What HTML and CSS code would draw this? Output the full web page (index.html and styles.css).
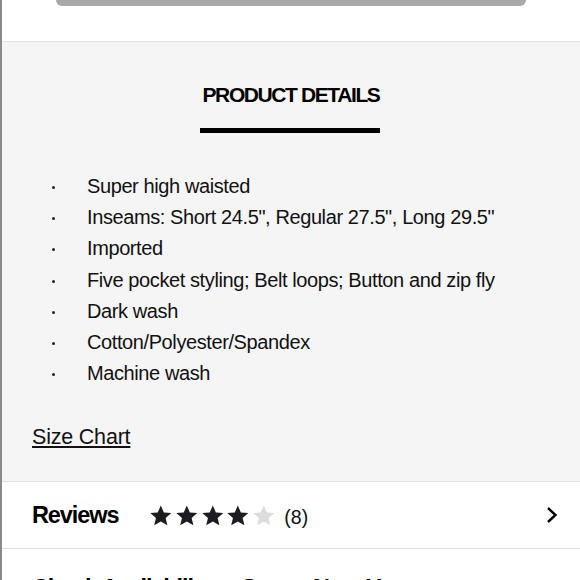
FILE: index.html
```html
<!DOCTYPE html>
<html lang="en">
<head>
    <meta charset="UTF-8">
    <meta name="viewport" content="width=device-width, initial-scale=1.0">
    <title>Product Details</title>
    <link rel="stylesheet" href="styles.css">
</head>
<body>
    <div class="top">
        <div class="handle"></div>
    </div>
    <div class="details">
        <h2 class="title">PRODUCT DETAILS</h2>
        <div class="rule"></div>
        <ul class="list">
            <li>Super high waisted</li>
            <li>Inseams: Short 24.5", Regular 27.5", Long 29.5"</li>
            <li>Imported</li>
            <li>Five pocket styling; Belt loops; Button and zip fly</li>
            <li>Dark wash</li>
            <li>Cotton/Polyester/Spandex</li>
            <li>Machine wash</li>
        </ul>
        <a class="size" href="#">Size Chart</a>
    </div>
    <div class="row">
        <span class="label">Reviews</span>
        <span class="stars">
            <svg viewBox="0 0 24 24" class="star"><path d="M12 1.5l3.1 7.1 7.6.6-5.8 5 1.8 7.5L12 17.7l-6.7 4 1.8-7.5-5.8-5 7.6-.6z"/></svg>
            <svg viewBox="0 0 24 24" class="star"><path d="M12 1.5l3.1 7.1 7.6.6-5.8 5 1.8 7.5L12 17.7l-6.7 4 1.8-7.5-5.8-5 7.6-.6z"/></svg>
            <svg viewBox="0 0 24 24" class="star"><path d="M12 1.5l3.1 7.1 7.6.6-5.8 5 1.8 7.5L12 17.7l-6.7 4 1.8-7.5-5.8-5 7.6-.6z"/></svg>
            <svg viewBox="0 0 24 24" class="star"><path d="M12 1.5l3.1 7.1 7.6.6-5.8 5 1.8 7.5L12 17.7l-6.7 4 1.8-7.5-5.8-5 7.6-.6z"/></svg>
            <svg viewBox="0 0 24 24" class="star empty"><path d="M12 1.5l3.1 7.1 7.6.6-5.8 5 1.8 7.5L12 17.7l-6.7 4 1.8-7.5-5.8-5 7.6-.6z"/></svg>
        </span>
        <span class="count">(8)</span>
        <svg class="chevron" viewBox="0 0 12 18"><path d="M2 2l7.5 7-7.5 7"/></svg>
    </div>
    <div class="row last">
        <span class="label">Check Availability at Stores Near You</span>
        <svg class="chevron" viewBox="0 0 12 18"><path d="M2 2l7.5 7-7.5 7"/></svg>
    </div>
</body>
</html>
```

FILE: styles.css
```css
body {
    margin: 0;
    padding: 0;
    font-family: "Liberation Sans", Arial, sans-serif;
    color: #111;
    background-color: #fff;
    border-left: 2px solid #8a8a8a;
    min-height: 100vh;
    box-sizing: border-box;
    overflow: hidden;
}
.top {
    height: 41px;
    border-bottom: 1px solid #e4e4e4;
}
.handle {
    height: 6px;
    margin: 0 54px 0 54px;
    background-color: #a9a9a9;
    border-radius: 0 0 6px 6px;
}
.details {
    background-color: #f5f5f5;
    padding: 41px 0 32px 30px;
    border-bottom: 1px solid #e0e0e0;
}
.title {
    margin: 0 30px 0 0;
    text-align: center;
    font-size: 21px;
    line-height: 24px;
    letter-spacing: -1.4px;
    color: #000;
}
.rule {
    width: 180px;
    height: 5px;
    margin: 21px auto 0 auto;
    position: relative;
    left: -16px;
    background-color: #000;
}
.list {
    list-style: none;
    margin: 38px 0 36px 0;
    padding: 0;
    font-size: 20px;
    letter-spacing: -0.4px;
    line-height: 31.2px;
}
.list li {
    padding-left: 55px;
    position: relative;
}
.list li::before {
    content: '';
    position: absolute;
    left: 20px;
    top: 15px;
    width: 3px;
    height: 3px;
    border-radius: 50%;
    background-color: #222;
}
.size {
    display: inline-block;
    font-size: 21.5px;
    line-height: 24px;
    letter-spacing: -0.2px;
    color: #111;
    text-decoration: underline;
    text-underline-offset: 2px;
}
.row {
    height: 66px;
    display: flex;
    align-items: center;
    padding: 0 22px 0 30px;
    border-bottom: 1px solid #e0e0e0;
}
.row.last {
    padding-top: 6px;
}
.label {
    font-size: 23.5px;
    font-weight: bold;
    letter-spacing: -1.1px;
    color: #000;
}
.stars {
    display: flex;
    gap: 2px;
    margin-left: 31px;
}
.star {
    width: 23.6px;
    height: 23.6px;
    fill: #1c1c22;
}
.star.empty {
    fill: #dcdcdc;
}
.count {
    font-size: 19.5px;
    margin-left: 9px;
    margin-top: 4px;
}
.chevron {
    width: 12px;
    height: 18px;
    margin-left: auto;
    fill: none;
    stroke: #000;
    stroke-width: 2.4;
}
```
